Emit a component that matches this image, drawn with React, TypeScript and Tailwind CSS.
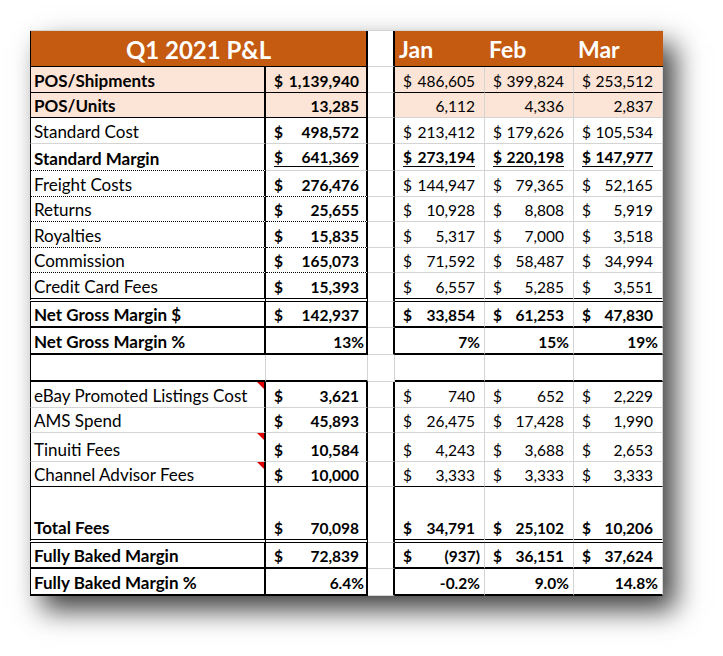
import React from "react";

type Line = "gray" | "thin" | "dot" | "dbl" | "thick";

const lines: Record<Line, string> = {
  gray: "border-b border-b-[#d4d4d4]",
  thin: "border-b border-b-black",
  dot: "border-b border-b-black [border-bottom-style:dotted]",
  dbl: "border-b-4 border-b-black [border-bottom-style:double]",
  thick: "border-b-2 border-b-black",
};

type Row = {
  label: string;
  total: string;
  months: string[];
  h: string;
  bold?: boolean;
  boldMonths?: boolean;
  peach?: boolean;
  lineLabel: Line;
  lineTotal: Line;
  lineMonths: Line;
  underline?: boolean;
  comment?: boolean;
  empty?: boolean;
};

const rows: Row[] = [
  { label: "POS/Shipments", total: "$1,139,940", months: ["$486,605", "$399,824", "$253,512"], h: "h-[26px]", bold: true, peach: true, lineLabel: "thin", lineTotal: "thin", lineMonths: "thin" },
  { label: "POS/Units", total: "13,285", months: ["6,112", "4,336", "2,837"], h: "h-[25px]", bold: true, peach: true, lineLabel: "thin", lineTotal: "thin", lineMonths: "gray" },
  { label: "Standard Cost", total: "$498,572", months: ["$213,412", "$179,626", "$105,534"], h: "h-[26px]", lineLabel: "gray", lineTotal: "gray", lineMonths: "gray" },
  { label: "Standard Margin", total: "$641,369", months: ["$273,194", "$220,198", "$147,977"], h: "h-[27px]", bold: true, boldMonths: true, underline: true, lineLabel: "dot", lineTotal: "gray", lineMonths: "gray" },
  { label: "Freight Costs", total: "$276,476", months: ["$144,947", "$79,365", "$52,165"], h: "h-[26px]", lineLabel: "dot", lineTotal: "dot", lineMonths: "gray" },
  { label: "Returns", total: "$25,655", months: ["$10,928", "$8,808", "$5,919"], h: "h-[25px]", lineLabel: "dot", lineTotal: "dot", lineMonths: "gray" },
  { label: "Royalties", total: "$15,835", months: ["$5,317", "$7,000", "$3,518"], h: "h-[26px]", lineLabel: "dot", lineTotal: "dot", lineMonths: "gray" },
  { label: "Commission", total: "$165,073", months: ["$71,592", "$58,487", "$34,994"], h: "h-[25px]", lineLabel: "dot", lineTotal: "dot", lineMonths: "gray" },
  { label: "Credit Card Fees", total: "$15,393", months: ["$6,557", "$5,285", "$3,551"], h: "h-[29px]", lineLabel: "dbl", lineTotal: "dbl", lineMonths: "dbl" },
  { label: "Net Gross Margin $", total: "$142,937", months: ["$33,854", "$61,253", "$47,830"], h: "h-[26px]", bold: true, boldMonths: true, lineLabel: "thick", lineTotal: "thick", lineMonths: "thick" },
  { label: "Net Gross Margin %", total: "13%", months: ["7%", "15%", "19%"], h: "h-[27px]", bold: true, boldMonths: true, lineLabel: "thick", lineTotal: "thick", lineMonths: "thick" },
  { label: "", total: "", months: ["", "", ""], h: "h-[27px]", empty: true, lineLabel: "thick", lineTotal: "thick", lineMonths: "thick" },
  { label: "eBay Promoted Listings Cost", total: "$3,621", months: ["$740", "$652", "$2,229"], h: "h-[26px]", comment: true, lineLabel: "gray", lineTotal: "gray", lineMonths: "gray" },
  { label: "AMS Spend", total: "$45,893", months: ["$26,475", "$17,428", "$1,990"], h: "h-[25px]", lineLabel: "gray", lineTotal: "gray", lineMonths: "gray" },
  { label: "Tinuiti Fees", total: "$10,584", months: ["$4,243", "$3,688", "$2,653"], h: "h-[29px]", comment: true, lineLabel: "gray", lineTotal: "gray", lineMonths: "gray" },
  { label: "Channel Advisor Fees", total: "$10,000", months: ["$3,333", "$3,333", "$3,333"], h: "h-[25px]", comment: true, lineLabel: "thin", lineTotal: "thin", lineMonths: "thin" },
  { label: "Total Fees", total: "$70,098", months: ["$34,791", "$25,102", "$10,206"], h: "h-[56px]", bold: true, boldMonths: true, lineLabel: "dbl", lineTotal: "dbl", lineMonths: "dbl" },
  { label: "Fully Baked Margin", total: "$72,839", months: ["$(937)", "$36,151", "$37,624"], h: "h-[26px]", bold: true, boldMonths: true, lineLabel: "thick", lineTotal: "thick", lineMonths: "thick" },
  { label: "Fully Baked Margin %", total: "6.4%", months: ["-0.2%", "9.0%", "14.8%"], h: "h-[27px]", bold: true, boldMonths: true, lineLabel: "thick", lineTotal: "thick", lineMonths: "thick" },
];

const grid = "grid grid-cols-[236px_102px_27px_90px_89px_89px]";

function Value({ v, underline }: { v: string; underline?: boolean }) {
  if (!v) return null;
  if (v.startsWith("$")) {
    const n = v.slice(1);
    return (
      <span className={`flex w-full justify-between ${underline ? "border-b border-b-black pb-[1px]" : ""}`}>
        <span>$</span>
        <span className={n.startsWith("(") ? "-mr-[5px]" : ""}>{n}</span>
      </span>
    );
  }
  return <span className="ml-auto">{v}</span>;
}

function TableRow({ row }: { row: Row }) {
  const side = row.empty ? "border-r border-r-[#d4d4d4]" : "border-r-2 border-r-black";
  const pct = row.total.endsWith("%");
  return (
    <div className={`${grid} ${row.h}`}>
      <div
        className={`relative flex items-end border-l border-l-black pb-[3px] pl-[3px] text-[17px] ${side} ${lines[row.lineLabel]} ${row.peach ? "bg-[#fce4d6]" : ""} ${row.bold ? "font-bold" : ""}`}
      >
        {row.label}
        {row.comment ? (
          <span className="absolute right-0 top-0 h-0 w-0 border-l-[7px] border-t-[7px] border-l-transparent border-t-[#e00000]" />
        ) : null}
      </div>
      <div
        className={`flex items-end pb-[3px] font-bold ${pct ? "pr-[2px]" : "pl-[8px] pr-[7px]"} ${side} ${lines[row.lineTotal]} ${row.peach ? "bg-[#fce4d6]" : ""}`}
      >
        <Value v={row.total} underline={row.underline} />
      </div>
      <div className={`${side} border-b border-b-[#d4d4d4]`} />
      {row.months.map((m, i) => (
        <div
          key={i}
          className={`flex items-end border-r border-r-[#d4d4d4] pb-[3px] ${pct ? "pr-[4px]" : "pl-[8px] pr-[9px]"} ${lines[row.lineMonths]} ${row.peach ? "bg-[#fce4d6]" : ""} ${row.boldMonths ? "font-bold" : ""}`}
        >
          <Value v={m} underline={row.underline} />
        </div>
      ))}
    </div>
  );
}

export default function App() {
  return (
    <div className="min-h-screen bg-white pl-[30px] pt-[30px] text-[15.5px] leading-none text-black [font-family:Lato,'Noto_Sans',sans-serif]">
      <div className="w-[633px] border-t border-t-[#d4d4d4] bg-white shadow-[12px_14px_26px_rgba(0,0,0,0.75)]">
        <div className={`${grid} h-[36px] text-[23px] font-bold text-white`}>
          <div className="col-span-2 flex items-end justify-center border-b border-l border-r-2 border-b-black border-l-black border-r-black bg-[#c55a11] pb-[4px] text-[24px]">
            Q1 2021 P&amp;L
          </div>
          <div className="border-b border-r-2 border-b-[#d4d4d4] border-r-black" />
          {["Jan", "Feb", "Mar"].map((m) => (
            <div key={m} className="flex items-end border-b border-b-black bg-[#c55a11] pb-[5px] pl-[4px]">
              {m}
            </div>
          ))}
        </div>
        {rows.map((row, i) => (
          <TableRow key={i} row={row} />
        ))}
      </div>
    </div>
  );
}
